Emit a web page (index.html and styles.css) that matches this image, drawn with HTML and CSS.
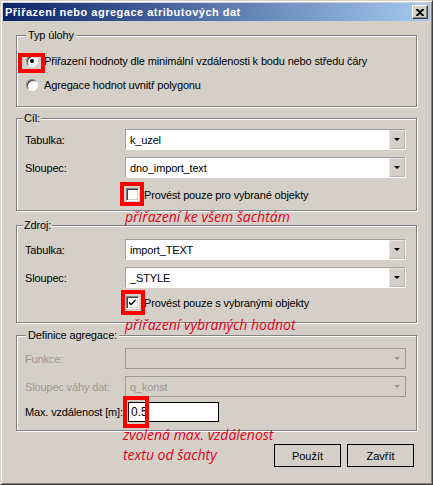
FILE: index.html
```html
<!DOCTYPE html>
<html lang="cs">
<head>
<meta charset="utf-8">
<title>Přiřazení nebo agregace atributových dat</title>
<link rel="stylesheet" href="styles.css">
</head>
<body>
<div class="window">
  <div class="titlebar">
    <span class="title">Přiřazení nebo agregace atributových dat</span>
    <span class="close"><svg width="8" height="7" viewBox="0 0 8 7"><path d="M0 0h2l2 2 2-2h2v1L5 3.5 8 6v1H6L4 5 2 7H0V6l3-2.5L0 1z" fill="#000"/></svg></span>
  </div>
  <div class="client">
    <fieldset class="group g1">
      <legend class="legend-wide">Typ úlohy</legend>
      <div class="radio-row"><span class="radio checked"></span><span>Přiřazení hodnoty dle minimální vzdálenosti k bodu nebo středu čáry</span></div>
      <div class="radio-row second"><span class="radio"></span><span>Agregace hodnot uvnitř polygonu</span></div>
    </fieldset>

    <fieldset class="group g2">
      <legend>Cíl:</legend>
      <div class="field-row"><span class="lbl">Tabulka:</span><div class="combo"><span class="val">k_uzel</span><span class="drop"><i></i></span></div></div>
      <div class="field-row"><span class="lbl">Sloupec:</span><div class="combo"><span class="val">dno_import_text</span><span class="drop"><i></i></span></div></div>
      <div class="check-row"><span class="check"></span><span>Provést pouze pro vybrané objekty</span></div>
    </fieldset>

    <fieldset class="group g3">
      <legend>Zdroj:</legend>
      <div class="field-row"><span class="lbl">Tabulka:</span><div class="combo"><span class="val">import_TEXT</span><span class="drop"><i></i></span></div></div>
      <div class="field-row"><span class="lbl">Sloupec:</span><div class="combo"><span class="val">_STYLE</span><span class="drop"><i></i></span></div></div>
      <div class="check-row"><span class="check checked"><svg width="9" height="9" viewBox="0 0 9 9"><path d="M1 3.5l2 2 4.5-4.5v2L3 7.5 1 5.5z" fill="#000"/></svg></span><span>Provést pouze s vybranými objekty</span></div>
    </fieldset>

    <fieldset class="group g4">
      <legend class="legend-wide">Definice agregace:</legend>
      <div class="field-row disabled"><span class="lbl">Funkce:</span><div class="combo"><span class="val"></span><span class="drop"><i></i></span></div></div>
      <div class="field-row disabled"><span class="lbl">Sloupec váhy dat:</span><div class="combo"><span class="val">q_konst</span><span class="drop"><i></i></span></div></div>
      <div class="max-row"><span class="lbl-max">Max. vzdálenost [m]:</span><span class="input">0.5</span></div>
    </fieldset>

    <div class="buttons">
      <button class="btn">Použít</button>
      <button class="btn">Zavřít</button>
    </div>
  </div>

  <div class="mark m1"></div>
  <div class="mark m2"></div>
  <div class="mark m3"></div>
  <div class="mark m4"></div>
  <div class="note n1">přiřazení ke všem šachtám</div>
  <div class="note n2">přiřazení vybraných hodnot</div>
  <div class="note n3">zvolená max. vzdálenost<br>textu od šachty</div>
</div>
</body>
</html>
```
FILE: styles.css
```css
html, body {
  margin: 0;
  padding: 0;
  background: #d4d0c8;
}
.window {
  position: relative;
  width: 433px;
  height: 485px;
  box-sizing: border-box;
  background: #d4d0c8;
  border: 1px solid;
  border-color: #d4d0c8 #404040 #404040 #d4d0c8;
  box-shadow: inset 1px 1px 0 #fff, inset -1px -1px 0 #808080;
  padding: 2px;
  font-family: "Liberation Sans", Arial, sans-serif;
  font-size: 11px;
  letter-spacing: -0.15px;
  color: #000;
  overflow: hidden;
}
.titlebar {
  height: 18px;
  display: flex;
  align-items: center;
  justify-content: space-between;
  padding: 0 2px 0 2px;
  background: linear-gradient(to right, #0a246a, #a6caf0);
}
.title {
  color: #fff;
  font-weight: bold;
  font-size: 11px;
  letter-spacing: 0.5px;
}
.close {
  width: 16px;
  height: 14px;
  box-sizing: border-box;
  background: #d4d0c8;
  border: 1px solid;
  border-color: #fff #404040 #404040 #fff;
  box-shadow: inset -1px -1px 0 #808080;
  display: flex;
  align-items: center;
  justify-content: center;
}
.client {
  display: flex;
  flex-direction: column;
}
.group {
  margin: 0 13px;
  border: 1px solid #808080;
  box-shadow: 1px 1px 0 #fff, inset 1px 1px 0 #fff;
  padding: 0 8px;
  min-width: 0;
}
.group legend {
  padding: 0 1px;
  margin-left: -2px;
  line-height: 14px;
  background: #d4d0c8;
}
.group legend.legend-wide {
  margin-left: 1px;
  padding: 0 2px;
}
.g1 { margin-top: 7px; padding-top: 11px; padding-bottom: 13px; }
.g2 { margin-top: 4px; padding-top: 4px; padding-bottom: 9px; }
.g3 { margin-top: 7px; padding-top: 7px; padding-bottom: 13px; }
.g4 { margin-top: 5px; padding-top: 6px; padding-bottom: 8px; }

.radio-row {
  display: flex;
  align-items: center;
  height: 16px;
}
.radio-row.second { margin-top: 8px; }
.radio {
  width: 12px;
  height: 12px;
  box-sizing: border-box;
  margin-left: 1px;
  margin-right: 6px;
  border-radius: 50%;
  background: #fff;
  border: 1px solid;
  border-color: #808080 #fff #fff #808080;
  box-shadow: inset 1px 1px 0 #404040;
  position: relative;
}
.radio.checked::after {
  content: "";
  position: absolute;
  left: 3px;
  top: 3px;
  width: 4px;
  height: 4px;
  border-radius: 50%;
  background: #000;
}

.field-row {
  display: flex;
  align-items: center;
  height: 21px;
}
.field-row + .field-row { margin-top: 7px; }
.lbl {
  width: 100px;
  flex: 0 0 100px;
}
.combo {
  flex: 0 0 281px;
  height: 21px;
  box-sizing: border-box;
  display: flex;
  align-items: center;
  background: #fff;
  border: 1px solid;
  border-color: #a0a0a0 #fff #fff #a0a0a0;
}
.combo .val {
  flex: 1;
  padding-left: 4px;
}
.combo .drop {
  width: 16px;
  height: 19px;
  background: #d4d0c8;
  box-sizing: border-box;
  border: 1px solid;
  border-color: #e4e2dc #b8b4ac #b8b4ac #e4e2dc;
  display: flex;
  align-items: center;
  justify-content: center;
}
.combo .drop i {
  width: 0;
  height: 0;
  border-left: 3px solid transparent;
  border-right: 3px solid transparent;
  border-top: 3px solid #000;
}
.disabled .lbl,
.disabled .val {
  color: #9c9890;
}
.disabled .combo {
  background: #d4d0c8;
  border-color: #a09c94;
}
.disabled .combo .drop {
  border-color: #d4d0c8;
}
.disabled .combo .drop i {
  border-top-color: #9c9890;
}

.check-row {
  display: flex;
  align-items: center;
  height: 13px;
  margin-top: 8px;
  padding-left: 101px;
}
.g2 .check-row { margin-top: 10px; }
.check {
  width: 13px;
  height: 13px;
  box-sizing: border-box;
  margin-right: 5px;
  background: #fff;
  border: 1px solid;
  border-color: #808080 #fff #fff #808080;
  box-shadow: inset 1px 1px 0 #404040, inset -1px -1px 0 #d4d0c8;
  display: flex;
  align-items: center;
  justify-content: center;
}

.max-row {
  display: flex;
  align-items: center;
  height: 20px;
  margin-top: 5px;
}
.lbl-max {
  width: 103px;
  flex: 0 0 103px;
}
.input {
  width: 91px;
  height: 20px;
  box-sizing: border-box;
  background: #fff;
  border: 1px solid #000;
  padding-left: 2px;
  display: flex;
  align-items: center;
  font-size: 12px;
  letter-spacing: 0;
}

.buttons {
  display: flex;
  justify-content: flex-end;
  gap: 6px;
  margin: 13px 16px 0 0;
}
.btn {
  width: 67px;
  height: 23px;
  box-sizing: border-box;
  background: #d4d0c8;
  border: 1px solid #000;
  font-family: "Liberation Sans", Arial, sans-serif;
  font-size: 11px;
  color: #000;
  padding: 0;
}

.mark {
  position: absolute;
  box-sizing: border-box;
  border: 4px solid #f00;
}
.m1 { left: 17px; top: 52px; width: 27px; height: 20px; }
.m2 { left: 119px; top: 181px; width: 24px; height: 24px; }
.m3 { left: 120px; top: 289px; width: 24px; height: 25px; }
.m4 { left: 122px; top: 395px; width: 26px; height: 32px; }

.note {
  position: absolute;
  left: 124px;
  color: #e0001c;
  font-family: "Open Sans", sans-serif;
  font-style: italic;
  font-size: 14px;
  line-height: 20px;
  letter-spacing: 0;
  white-space: nowrap;
}
.n1 { top: 206px; }
.n2 { top: 314px; }
.n3 { top: 424px; left: 122px; }
```
